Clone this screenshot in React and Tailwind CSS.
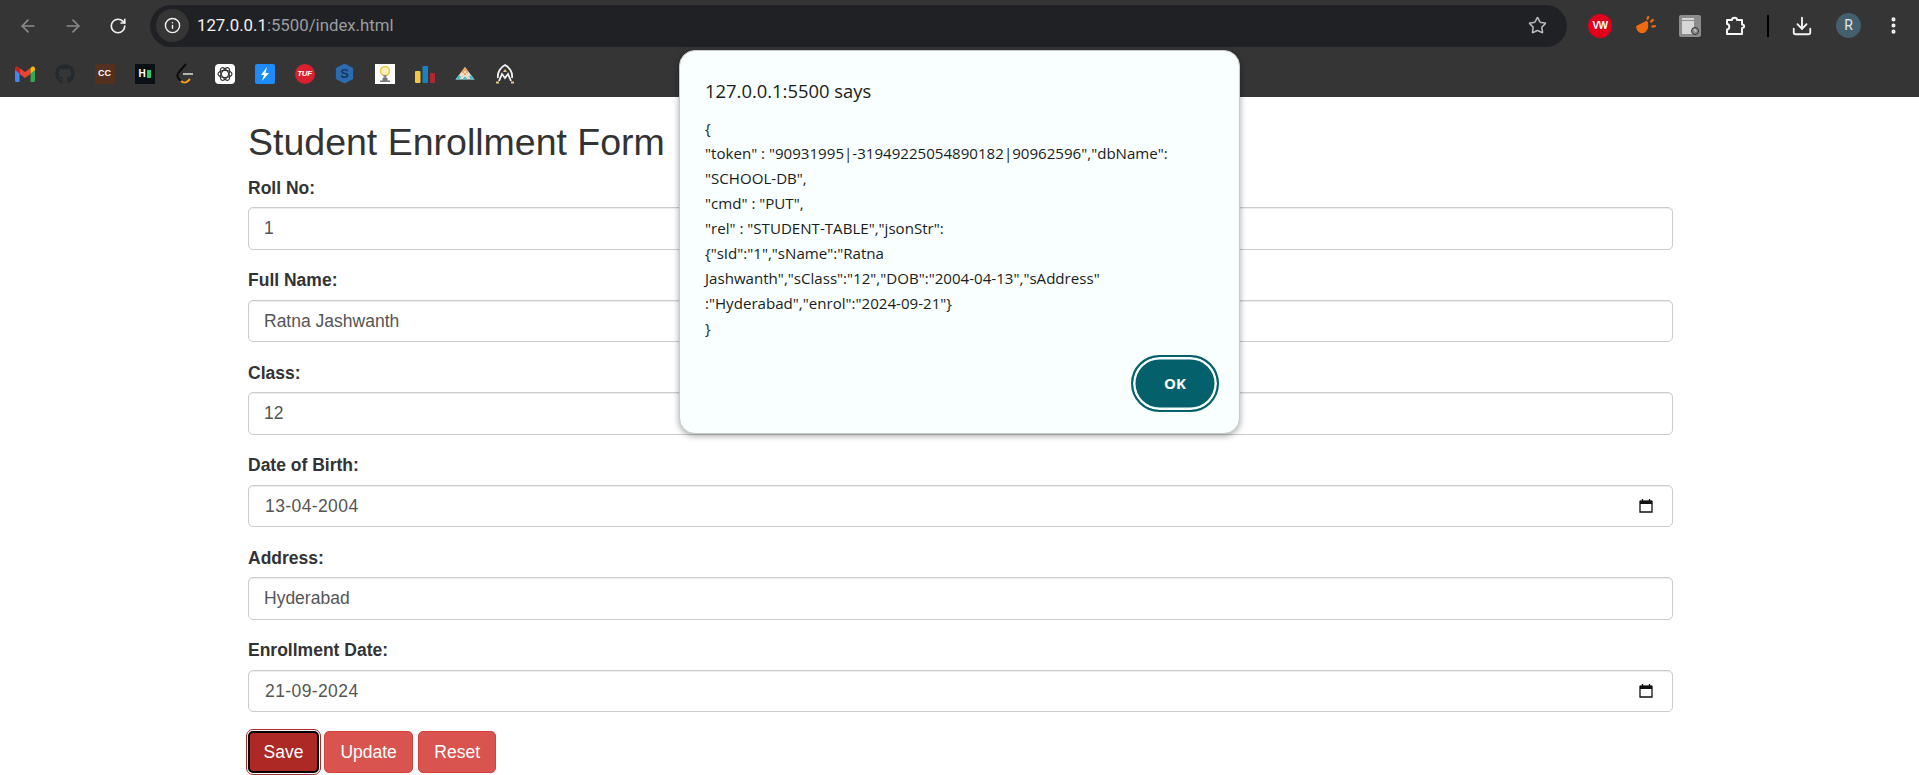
import React from "react";
import {
  ArrowLeft,
  ArrowRight,
  RotateCw,
  Info,
  Star,
  Download,
  EllipsisVertical,
} from "lucide-react";
import { FaGithub } from "react-icons/fa";

const Gmail = () => (
  <svg width="20" height="16" viewBox="0 0 20 16">
    <path d="M0 3v11.500c0 .8.600 1.500 1.400 1.500H4.500V7z" fill="#4285f4" />
    <path d="M15.500 7v9h3.100c.8 0 1.400-.7 1.400-1.500V3z" fill="#34a853" />
    <path d="M4.500 2v6L10 12l5.500-4V2L10 6z" fill="#ea4335" />
    <path d="M0 2.500V4l4.500 3.500V2L3 .8C1.700-.2 0 .8 0 2.500z" fill="#c5221f" />
    <path d="M15.500 2v5.500L20 4V2.500C20 .8 18.300-.2 17 .8z" fill="#fbbc04" />
  </svg>
);

const LeetCode = () => (
  <svg width="20" height="22" viewBox="0 0 20 22" fill="none" strokeWidth="2">
    <path d="M11 1 4 9c-2 2.500-2 5 0 7l2 2" stroke="#0c0c0c" />
    <path d="M6 18c2 2 5 2 7 0l2-2" stroke="#f89f1b" />
    <path d="M8 11h10" stroke="#b3b3b3" />
  </svg>
);

const ChatGpt = () => (
  <div className="flex h-5 w-5 items-center justify-center rounded-[4px] bg-white">
    <svg width="16" height="16" viewBox="0 0 16 16" fill="none" stroke="#333" strokeWidth="1.100">
      <ellipse cx="8" cy="8" rx="7" ry="3.600" />
      <ellipse cx="8" cy="8" rx="7" ry="3.600" transform="rotate(60 8 8)" />
      <ellipse cx="8" cy="8" rx="7" ry="3.600" transform="rotate(120 8 8)" />
    </svg>
  </div>
);

const Bolt = () => (
  <div className="flex h-5 w-5 items-center justify-center rounded-[2px] bg-[#1e8cf8]">
    <svg width="10" height="14" viewBox="0 0 10 14"><path d="M7 0 1 8h3l-2 6 7-8H5.500z" fill="#fff" /></svg>
  </div>
);

const Bulb = () => (
  <svg width="20" height="20" viewBox="0 0 20 20">
    <rect width="20" height="20" fill="#fff" />
    <circle cx="10" cy="7" r="4.500" fill="#fdf2c0" stroke="#f0c63c" strokeWidth="1.500" />
    <path d="M8.500 11h3v3h-3z" fill="#8b8b90" />
    <path d="M5 16.500h10v1.500H5zM7.500 14h5v2.500h-5z" fill="#77777c" />
  </svg>
);

const Bars = () => (
  <svg width="20" height="20" viewBox="0 0 20 20">
    <rect x="0" y="7" width="5.500" height="12" rx="1" fill="#f4c542" />
    <rect x="7.500" y="2" width="5.500" height="17" rx="1" fill="#1a82c4" />
    <rect x="15" y="9" width="5" height="10" rx="1" fill="#b3262c" />
  </svg>
);

const Mountain = () => (
  <svg width="20" height="16" viewBox="0 0 20 16">
    <path d="M10 1 19.500 13.500 H.5z" fill="#e9dcc8" />
    <path d="M10 1 13 5H7z" fill="#f1a45c" />
    <path d="M7 5h2v2H7zM11 5h2v2h-2zM9 7h2v2H9z" fill="#f1a45c" />
    <path d="M.5 13.500 4 9l2 2-2 2.500zM19.500 13.500 16 9l-2 2 2 2.500z" fill="#45c0c8" />
    <path d="M7 13.500l3-3 3 3z" fill="#45c0c8" />
  </svg>
);

const WLogo = () => (
  <svg width="20" height="20" viewBox="0 0 20 20" fill="none" strokeWidth="1.800">
    <path d="M3 14 C2 8 6 3 10 1c4 2 8 7 7 13" stroke="#f2f2f2" />
    <path d="M4 17 7 10l3 4 3-4 3 7" stroke="#f2f2f2" />
    <path d="M1 18.500h3M16 18.500h3" stroke="#e6c88a" />
    <path d="M10 5l2 3H8z" fill="#e6c88a" stroke="none" />
  </svg>
);

const bookmarks = [
  <Gmail />,
  <FaGithub size={20} color="#24292f" />,
  <div className="flex h-5 w-5 items-center justify-center bg-[#56301f] text-[9px] font-bold text-white">CC</div>,
  <div className="flex h-5 w-5 items-center justify-center gap-px bg-[#0b1017]">
    <span className="text-[10px] font-bold leading-none text-white">H</span>
    <span className="h-[8px] w-[4px] bg-[#2ec866]"></span>
  </div>,
  <LeetCode />,
  <ChatGpt />,
  <Bolt />,
  <div className="flex h-5 w-5 items-center justify-center rounded-full bg-[#d8202f] text-[8px] font-bold italic tracking-tighter text-white">TUF</div>,
  <div className="flex h-5 w-5 items-center justify-center bg-[#2b6cb0] text-[13px] font-bold text-[#16385c] [clip-path:polygon(50%_0,93%_22%,93%_78%,50%_100%,7%_78%,7%_22%)]">S</div>,
  <Bulb />,
  <Bars />,
  <Mountain />,
  <WLogo />,
];

const Field = ({ label, value, date }) => (
  <div className="mb-[18.750px]">
    <label className="mb-[6.250px] block text-[17.500px] font-bold leading-[25px] text-[#333]">{label}</label>
    <div className="flex h-[42.500px] items-center justify-between rounded-[5px] border border-[#ccc] bg-white pl-[15px] pr-[18px] text-[17.500px] text-[#555] shadow-[inset_0_1px_1px_rgba(0,0,0,0.075)]">
      <span className={date ? "pl-px tracking-[0.4px]" : ""}>{value}</span>
      {date && (
        <svg width="16" height="16" viewBox="0 0 16 16" fill="none">
          <path d="M2 3.500h12v10.500H2z" stroke="#111" strokeWidth="1.300" />
          <path d="M2 2.500h12V6H2z" fill="#111" />
          <path d="M4.500 1v2M11.500 1v2" stroke="#111" strokeWidth="1.300" />
        </svg>
      )}
    </div>
  </div>
);

const fields = [
  { label: "Roll No:", value: "1" },
  { label: "Full Name:", value: "Ratna Jashwanth" },
  { label: "Class:", value: "12" },
  { label: "Date of Birth:", value: "13-04-2004", date: true },
  { label: "Address:", value: "Hyderabad" },
  { label: "Enrollment Date:", value: "21-09-2024", date: true },
];

const dialogLines = [
  "{",
  '"token" : "90931995|-31949225054890182|90962596","dbName":',
  '"SCHOOL-DB",',
  '"cmd" : "PUT",',
  '"rel" : "STUDENT-TABLE","jsonStr":',
  '{"sId":"1","sName":"Ratna',
  'Jashwanth","sClass":"12","DOB":"2004-04-13","sAddress"',
  ':"Hyderabad","enrol":"2024-09-21"}',
  "}",
];

export default function App() {
  return (
    <div className="relative h-[775px] w-full overflow-hidden bg-white font-['Liberation_Sans',Arial,sans-serif]">
      {/* browser chrome */}
      <div className="h-[97px] bg-[#353535]">
        <div className="flex h-[50px] items-center pl-[5px] pr-[5px] pt-[1px]">
          <div className="flex w-[45px] justify-center"><ArrowLeft size={20} color="#8a8a8a" /></div>
          <div className="flex w-[45px] justify-center"><ArrowRight size={20} color="#8a8a8a" /></div>
          <div className="flex w-[45px] justify-center"><RotateCw size={18} color="#f1f1f1" strokeWidth={2.2} /></div>
          <div className="ml-[10px] flex h-[42px] w-[1417px] items-center rounded-full bg-[#202124] pl-[6px] pr-[20px]">
            <div className="flex h-[33px] w-[33px] items-center justify-center rounded-full bg-[#353535]">
              <Info size={17} color="#f1f1f1" />
            </div>
            <span className="ml-[8px] font-['Roboto',sans-serif] text-[16.800px] text-[#f1f1f1]">
              127.0.0.1<span className="text-[#9a9da1]">:5500/index.html</span>
            </span>
            <Star size={19} color="#b8b8b8" className="ml-auto" />
          </div>
          <div className="ml-[21px] flex h-[24px] w-[24px] items-center justify-center rounded-full bg-[#e0001a] text-[10px] font-bold tracking-tighter text-white">VW</div>
          <div className="ml-[22px] flex w-[24px] justify-center">
            <svg width="24" height="24" viewBox="0 0 22 22" fill="none">
              <path d="M2 11 12 6c2 4 1 9-2 11-4 2-8-1-8-6z" fill="#f26a0f" />
              <path d="M12 5l1.500-3M15 7.500 18 5M16 11.500l4-.5" stroke="#f26a0f" strokeWidth="2" />
            </svg>
          </div>
          <div className="ml-[21px] flex h-[22px] w-[22px] items-center justify-center rounded-[2px] bg-[#8c8c8c]">
            <svg width="18" height="18" viewBox="0 0 18 18">
              <path d="M1 1h12v16H1z" fill="#d6d6d6" />
              <path d="M1 3.500h12" stroke="#8c8c8c" />
              <circle cx="14" cy="14" r="3.500" fill="#8c8c8c" stroke="#333" />
              <path d="M14 12v2h1.500" stroke="#eee" fill="none" strokeWidth=".8" />
            </svg>
          </div>
          <div className="ml-[22px] flex w-[24px] justify-center">
            <svg width="22" height="22" viewBox="0 0 22 22" fill="none" stroke="#f5f5f5" strokeWidth="2" strokeLinejoin="round">
              <path d="M3 5h5c0-3 5-3 5 0h5v4.500c2.800 0 2.800 3.500 0 3.500v6H3v-4.500c3 0 3-5.500 0-5.500z" />
            </svg>
          </div>
          <div className="ml-[20px] h-[22px] w-[2px] bg-black"></div>
          <div className="ml-[21px] flex w-[24px] justify-center"><Download size={22} color="#f5f5f5" /></div>
          <div className="ml-[22px] flex h-[25px] w-[25px] items-center justify-center rounded-full bg-[#44606e] font-['Roboto',sans-serif] text-[14px] text-[#e6e6e6]">R</div>
          <div className="ml-[20px] flex w-[24px] justify-center"><EllipsisVertical size={21} color="#f5f5f5" strokeWidth={2.6} /></div>
        </div>
        <div className="flex h-[47px] items-center pl-[4.500px]">
          {bookmarks.map((b, i) => (
            <div key={i} className="flex w-[40px] justify-center">{b}</div>
          ))}
        </div>
      </div>

      {/* page */}
      <div className="ml-[248px] w-[1425px]">
        <h1 className="mb-[12.500px] mt-[25px] text-[37.500px] leading-[41.250px] text-[#333]">Student Enrollment Form</h1>
        {fields.map((f) => (
          <Field key={f.label} {...f} />
        ))}
        <div className="flex gap-[5px]">
          <button className="h-[42.500px] rounded-[5px] border-2 border-black bg-[#ac2925] px-[13.500px] text-[17.500px] text-white outline outline-1 outline-offset-[1px] outline-[#ac2925]">Save</button>
          <button className="h-[42.500px] rounded-[5px] border border-[#d43f3a] bg-[#d9534f] px-[15.500px] text-[17.500px] text-white">Update</button>
          <button className="h-[42.500px] rounded-[5px] border border-[#d43f3a] bg-[#d9534f] px-[15px] text-[17.500px] text-white">Reset</button>
        </div>
      </div>

      {/* alert dialog */}
      <div className="absolute left-[679px] top-[50px] h-[384px] w-[561px] rounded-[16px] border border-[#c4cccc] bg-[#f8fffe] pl-[25px] pr-[20px] pt-[27px] font-['Open_Sans',sans-serif] text-[#1b1c1c] shadow-[0_2px_6px_rgba(0,0,0,0.35)]">
        <div className="text-[18.400px] font-medium leading-[26px]">127.0.0.1:5500 says</div>
        <div className="mt-[11.500px] text-[15.100px] leading-[25px]">
          {dialogLines.map((l, i) => (
            <div key={i} className="whitespace-nowrap">{l}</div>
          ))}
        </div>
        <div className="mt-[14px] flex justify-end">
          <button className="h-[57px] w-[88px] rounded-full border-2 border-[#04616b] bg-[#04616b] text-[15px] font-bold text-white shadow-[inset_0_0_0_2.500px_#f8fffe]">
            OK
          </button>
        </div>
      </div>
    </div>
  );
}
